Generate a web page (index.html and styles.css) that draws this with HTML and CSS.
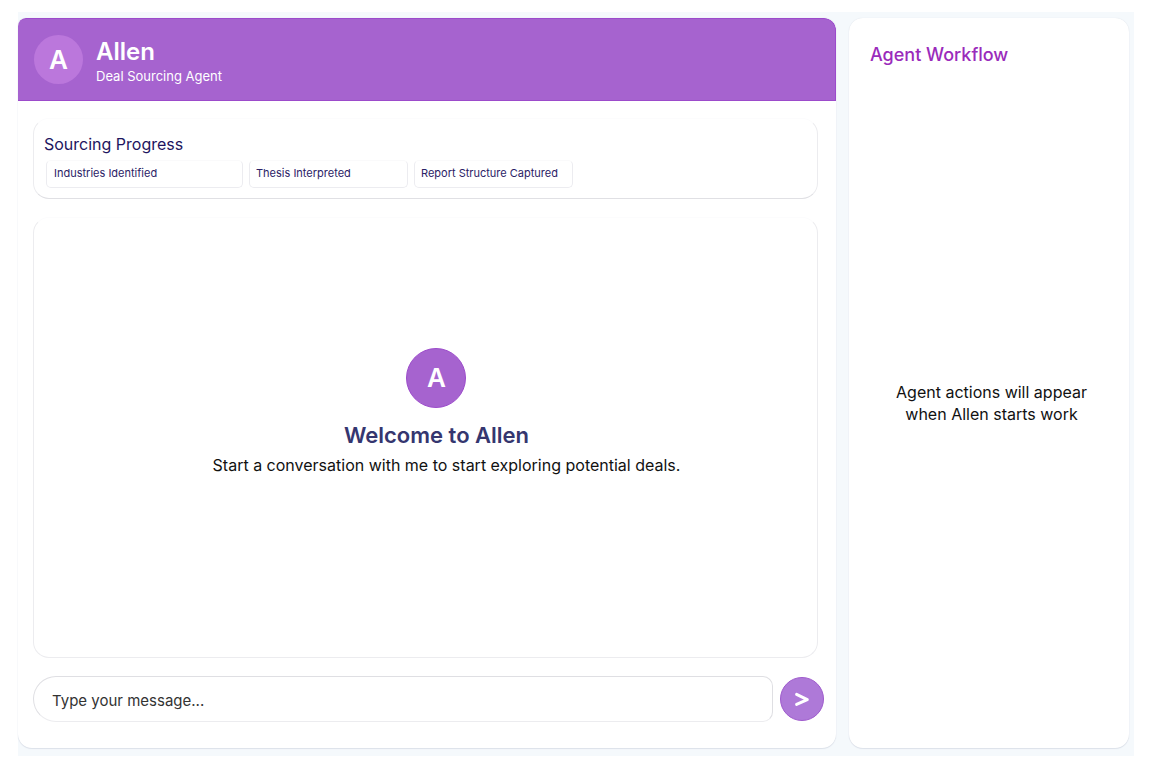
FILE: index.html
```
<!DOCTYPE html>
<html lang="en">
<head>
  <meta charset="UTF-8">
  <meta name="viewport" content="width=device-width, initial-scale=1.0">
  <title>Allen | Deal Sourcing Agent</title>
  <link rel="stylesheet" href="styles.css">
</head>
<body>
  <div class="app">
    <!-- Chat -->
    <main class="panel chat-panel">
      <header class="chat-header">
        <div class="avatar">A</div>
        <div class="agent-name">
          <h1>Allen</h1>
          <p>Deal Sourcing Agent</p>
        </div>
      </header>

      <div class="chat-body">
        <section class="card progress">
          <h2>Sourcing Progress</h2>
          <ul class="steps">
            <li class="step step-wide">Industries Identified</li>
            <li class="step">Thesis Interpreted</li>
            <li class="step">Report Structure Captured</li>
          </ul>
        </section>

        <section class="card messages">
          <div class="welcome">
            <div class="avatar avatar-large">A</div>
            <h2>Welcome to Allen</h2>
            <p>Start a conversation with me to start exploring potential deals.</p>
          </div>
        </section>
      </div>

      <form class="input-row">
        <input type="text" id="user-input" placeholder="Type your message..." aria-label="Type your message">
        <button type="button" aria-label="Send">
          <svg width="16" height="16" viewBox="0 0 16 16" fill="none" stroke="#fff" stroke-width="3" stroke-linecap="round" stroke-linejoin="round">
            <path d="M2.6 3.4 13.3 8.7 2.6 13.4"/>
          </svg>
        </button>
      </form>
    </main>

    <!-- Workflow -->
    <aside class="panel workflow">
      <h2>Agent Workflow</h2>
      <p>Agent actions will appear<br>when Allen starts work</p>
    </aside>
  </div>
</body>
</html>
```
FILE: styles.css
```
* {
  box-sizing: border-box;
}
body {
  margin: 0;
  padding: 12px 18px;
  font-family: Inter, "Liberation Sans", sans-serif;
  background-color: #fff;
  color: #111;
}
h1, h2, p, ul {
  margin: 0;
  padding: 0;
}
.app {
  display: flex;
  gap: 13px;
  min-height: calc(100vh - 24px);
  padding: 6px 5px 8px 0;
  background-color: #f5f9fc;
}
.panel {
  display: flex;
  flex-direction: column;
  background-color: #fff;
  border-radius: 14px;
  box-shadow: 0 0 1px #d5dae3, 0 1px 1px #dde2ea;
}
.chat-panel {
  flex: 1;
  border-radius: 8px 12px 14px 14px;
  overflow: hidden;
}
.chat-header {
  display: flex;
  align-items: center;
  gap: 13px;
  height: 83px;
  padding: 0 16px;
  background-color: #a663cf;
  border: solid #9c4bcb;
  border-width: 1px 1px 1px 0;
  border-radius: 8px 12px 0 0;
  color: #fff;
}
.agent-name {
  padding-top: 4px;
}
.chat-header h1 {
  font-size: 24px;
  font-weight: 600;
  line-height: 28px;
}
.chat-header p {
  font-size: 13px;
  line-height: 20px;
}
.avatar {
  display: flex;
  align-items: center;
  justify-content: center;
  width: 49px;
  height: 49px;
  border-radius: 50%;
  background-color: #bb77dc;
  color: #fff;
  font-size: 26px;
  font-weight: 600;
}
.avatar-large {
  width: 60px;
  height: 60px;
  background-color: #a663cf;
  border: 1px solid #9c4bcb;
}
.chat-body {
  flex: 1;
  display: flex;
  flex-direction: column;
  gap: 18px;
  padding: 17px 18px 18px 15px;
}
.card {
  border: 1px solid #ececef;
  border-top-color: #fcfcfd;
  border-radius: 16px;
}
.progress {
  padding: 13px 10px 10px;
  border-bottom-color: #e0e0e4;
}
.progress h2 {
  font-size: 16px;
  font-weight: 400;
  line-height: 24px;
  color: #1e1560;
}
.steps {
  display: flex;
  gap: 6px;
  margin: 4px 2px 0;
  list-style: none;
}
.step {
  width: 159px;
  height: 28px;
  padding: 0 6px;
  border: 1px solid #ececf0;
  border-top-color: #fafafb;
  border-radius: 5px;
  font-size: 11px;
  line-height: 24px;
  color: #2b2266;
}
.step-wide {
  width: 197px;
  padding-left: 7px;
}
.messages {
  flex: 1;
  display: flex;
  align-items: center;
  justify-content: center;
}
.welcome {
  display: flex;
  flex-direction: column;
  align-items: center;
  padding-left: 22px;
  padding-bottom: 48px;
}
.welcome h2 {
  margin-top: 12px;
  font-size: 22px;
  font-weight: 600;
  line-height: 30px;
  color: #35366f;
}
.welcome p {
  padding-left: 20px;
  font-size: 16px;
  line-height: 30px;
}
.input-row {
  display: flex;
  align-items: center;
  gap: 7px;
  padding: 0 12px 26px 15px;
}
.input-row input {
  flex: 1;
  min-width: 0;
  height: 46px;
  padding: 2px 18px 0;
  border: 1px solid #dfdfe3;
  border-bottom-color: #ececef;
  border-radius: 23px 10px 10px 23px;
  background-color: #fff;
  font-family: inherit;
  font-size: 15px;
}
.input-row input::placeholder {
  color: #333;
  opacity: 1;
}
.input-row button {
  display: flex;
  align-items: center;
  justify-content: center;
  width: 44px;
  height: 44px;
  padding: 0;
  border: 1px solid #9f5bcd;
  border-radius: 50%;
  background-color: #ae79d8;
  cursor: pointer;
}
.workflow {
  width: 280px;
  padding: 22px 21px 12px;
}
.workflow h2 {
  font-size: 18px;
  font-weight: 500;
  line-height: 30px;
  color: #9a2bbb;
}
.workflow p {
  margin: auto 0;
  padding-left: 5px;
  font-size: 16px;
  line-height: 22px;
  text-align: center;
}
```
